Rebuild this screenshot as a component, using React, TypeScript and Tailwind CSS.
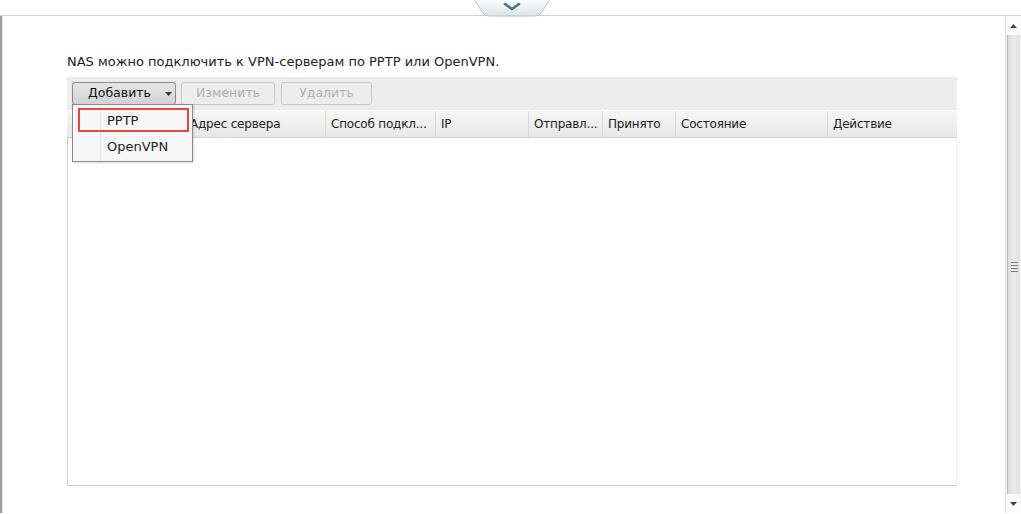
import React from "react";

const font = { fontFamily: '"DejaVu Sans", Verdana, sans-serif' };

const cols = [
  { w: 117, label: "" },
  { w: 141, label: "Адрес сервера" },
  { w: 110, label: "Способ подкл..." },
  { w: 93, label: "IP" },
  { w: 74, label: "Отправл..." },
  { w: 73, label: "Принято" },
  { w: 152, label: "Состояние" },
  { w: 130, label: "Действие" },
];

function Tab() {
  return (
    <svg width="78" height="18" viewBox="0 0 78 18" className="block">
      <defs>
        <linearGradient id="tg" x1="0" y1="0" x2="0" y2="1">
          <stop offset="0" stopColor="#ffffff" />
          <stop offset="1" stopColor="#d9e2e8" />
        </linearGradient>
      </defs>
      <path d="M0 -1 L10 14 Q12 17 16 17 L62 17 Q66 17 68 14 L78 -1 Z" fill="url(#tg)" stroke="#b4c0c8" strokeWidth="1" />
      <path d="M32 5 L39 10 L46 5" fill="none" stroke="#4d7190" strokeWidth="2.6" strokeLinecap="round" strokeLinejoin="round" />
    </svg>
  );
}

export default function App() {
  return (
    <div className="relative w-[1021px] h-[514px] overflow-hidden bg-white text-[#222]" style={font}>
      <div className="h-[16px] flex justify-center pl-[2px] border-b border-[#cfcfcf]">
        <div className="-mt-[1px]">
          <Tab />
        </div>
      </div>
      <div className="flex h-[497px]">
        <div className="w-[3px] border-l-2 border-[#9a9a9a] bg-[#e8e8e8]" />
        <div className="flex-1 pl-[64px] pt-[38px]">
          <div className="text-[13px] leading-[16px] text-[#222]">
            NAS можно подключить к VPN-серверам по PPTP или OpenVPN.
          </div>
          <div className="mt-[7px] w-[890px] h-[33px] bg-[#ececec] flex items-center gap-[5px] px-[5px]">
            <button className="h-[23px] w-[104px] rounded-[3px] border border-[#8c8c8c] bg-gradient-to-b from-[#e6e6e6] to-[#d2d2d2] flex items-center text-[12.5px] text-[#111] pl-[15px]">
              <span>Добавить</span>
              <svg width="7" height="4" viewBox="0 0 7 4" className="ml-[14px]">
                <path d="M0 0 L7 0 L3.5 4 Z" fill="#333" />
              </svg>
            </button>
            <button className="h-[23px] w-[94px] rounded-[3px] border border-[#c8c8c8] bg-[#ececec] text-[12.5px] text-[#b0b0b0]">
              Изменить
            </button>
            <button className="ml-[1px] h-[23px] w-[91px] rounded-[3px] border border-[#c8c8c8] bg-[#ececec] text-[12.5px] text-[#b0b0b0]">
              Удалить
            </button>
          </div>
          <div className="mt-[1px] w-[890px] h-[27px] flex bg-gradient-to-b from-[#f6f6f6] to-[#e7e7e7] border-b border-[#d2d2d2]">
            {cols.map((c, i) => (
              <div
                key={i}
                className={`h-full flex items-center pl-[5px] text-[12px] tracking-[-0.2px] text-[#222] whitespace-nowrap overflow-hidden ${i > 0 ? "border-l border-[#d6d6d6]" : ""}`}
                style={{ width: c.w }}
              >
                {c.label}
              </div>
            ))}
          </div>
          <div className="w-[890px] h-[348px] border-l border-b border-r border-[#cbcbcb] border-r-[#f0f0f0]" />
        </div>
        <div className="w-[16px] flex flex-col border-l border-[#dcdcdc] bg-[#f7f7f7]">
          <div className="h-[19px] flex items-center justify-center bg-[#fafafa]">
            <svg width="7" height="4" viewBox="0 0 7 4">
              <path d="M3.5 0 L7 4 L0 4 Z" fill="#444" />
            </svg>
          </div>
          <div className="flex-1 mx-[1px] border-l border-[#b8b8b8] bg-gradient-to-r from-[#dadada] via-[#ececec] to-[#e0e0e0] flex items-center justify-center">
            <div className="flex flex-col gap-[2px] mt-[4px]">
              <div className="w-[7px] h-[1px] bg-[#777]" />
              <div className="w-[7px] h-[1px] bg-[#777]" />
              <div className="w-[7px] h-[1px] bg-[#777]" />
              <div className="w-[7px] h-[1px] bg-[#777]" />
            </div>
          </div>
          <div className="h-[19px] flex items-center justify-center bg-[#fafafa]">
            <svg width="7" height="4" viewBox="0 0 7 4">
              <path d="M0 0 L7 0 L3.5 4 Z" fill="#444" />
            </svg>
          </div>
        </div>
      </div>

      <div className="absolute left-[72px] top-[104px] w-[121px] h-[58px] border border-[#8a8a8a] bg-[#f7f7f7] shadow-[1px_1px_2px_rgba(0,0,0,0.15)]">
        <div className="absolute left-[27px] top-0 bottom-0 w-[1px] bg-[#e2e2e2]" />
        <div className="relative flex flex-col pt-[3px]">
          <div className="relative h-[26px] flex items-center pl-[34px] text-[13px] text-[#222]">
            <div className="absolute left-[5px] top-[0px] w-[111px] h-[24px] border-2 border-[#e8463f]" />
            PPTP
          </div>
          <div className="h-[26px] flex items-center pl-[34px] text-[13px] text-[#222]">OpenVPN</div>
        </div>
      </div>
    </div>
  );
}
